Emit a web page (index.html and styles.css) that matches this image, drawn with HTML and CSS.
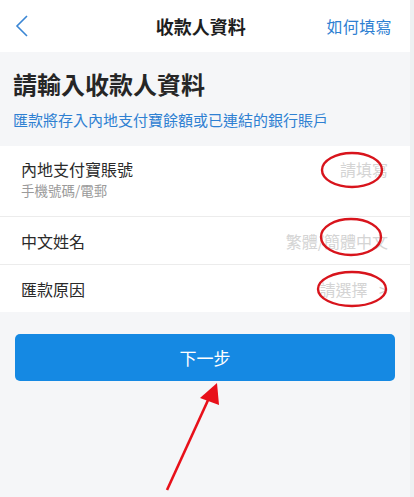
FILE: index.html
```html
<!DOCTYPE html>
<html lang="zh-Hant">
<head>
  <meta charset="UTF-8" />
  <meta name="viewport" content="width=device-width, initial-scale=1.0" />
  <title>收款人資料</title>
  <link rel="stylesheet" href="styles.css">
</head>
<body>
  <div class="app">
    <header class="topbar">
      <span class="back">
        <svg width="14" height="22" viewBox="0 0 14 22"><path d="M12 1 L2 11 L12 21" fill="none" stroke="#3a86d4" stroke-width="1.6"/></svg>
      </span>
      <h1 class="title">收款人資料</h1>
      <a class="help">如何填寫</a>
    </header>

    <section class="intro">
      <h2>請輸入收款人資料</h2>
      <p>匯款將存入內地支付寶餘額或已連結的銀行賬戶</p>
    </section>

    <div class="card">
      <div class="row tall">
        <div class="label">
          <div>內地支付寶賬號</div>
          <div class="hint">手機號碼/電郵</div>
        </div>
        <div class="value">請填寫</div>
      </div>
      <div class="row">
        <div class="label">中文姓名</div>
        <div class="value">繁體/簡體中文</div>
      </div>
      <div class="row">
        <div class="label">匯款原因</div>
        <div class="value">請選擇 <span class="chev">&gt;</span></div>
      </div>
    </div>

    <div class="actions">
      <button class="next">下一步</button>
    </div>
  </div>

  <svg class="marks" width="414" height="497" viewBox="0 0 414 497">
    <ellipse cx="352" cy="170" rx="30" ry="17" fill="none" stroke="#d8141c" stroke-width="2.4"/>
    <ellipse cx="351" cy="237" rx="30" ry="18" fill="none" stroke="#d8141c" stroke-width="2.4"/>
    <ellipse cx="352" cy="289" rx="34" ry="17" fill="none" stroke="#d8141c" stroke-width="2.4"/>
    <line x1="167" y1="490" x2="209" y2="398" stroke="#e8101a" stroke-width="2.6"/>
    <polygon points="217,383 219,405 200,398" fill="#e8101a"/>
  </svg>
</body>
</html>
```

FILE: styles.css
```css
body {
  margin: 0;
  padding: 0;
  background: #eef0f2;
  font-family: "Noto Sans CJK TC", "Noto Sans", sans-serif;
  color: #222;
}

.app {
  width: 410px;
  height: 497px;
  background: #f5f6f8;
  display: flex;
  flex-direction: column;
}

.topbar {
  height: 52px;
  background: #fff;
  display: flex;
  align-items: center;
  justify-content: space-between;
  padding: 0 18px 0 15px;
}

.back {
  display: flex;
  width: 60px;
}

.title {
  margin: 0;
  font-size: 18px;
  font-weight: bold;
  color: #1e1e1e;
}

.help {
  font-size: 16px;
  color: #2e80d2;
  letter-spacing: 0.4px;
}

.intro {
  padding: 12px 13px 0;
  height: 82px;
}

.intro h2 {
  margin: 0;
  font-size: 24px;
  font-weight: bold;
  line-height: 40px;
  color: #262626;
}

.intro p {
  margin: 6px 0 0;
  font-size: 15px;
  line-height: 20px;
  color: #2e80d2;
}

.card {
  background: #fff;
}

.row {
  height: 47px;
  display: flex;
  align-items: center;
  justify-content: space-between;
  padding: 0 22px 0 21px;
  border-top: 1px solid #ececec;
  font-size: 16px;
  color: #2a2a2a;
}

.row.tall {
  height: 70px;
  border-top: none;
  align-items: flex-start;
  padding-top: 11px;
  box-sizing: border-box;
}

.hint {
  font-size: 13.5px;
  color: #9a9a9a;
  line-height: 19px;
}

.value {
  color: #d4d4d4;
}

.chev {
  margin-left: 8px;
}

.actions {
  padding: 22px 15px 0;
}

.next {
  width: 100%;
  height: 47px;
  border: none;
  border-radius: 5px;
  background: #1589e3;
  color: #fff;
  font-family: inherit;
  font-size: 17px;
}

.marks {
  position: absolute;
  left: 0;
  top: 0;
  pointer-events: none;
}
```
